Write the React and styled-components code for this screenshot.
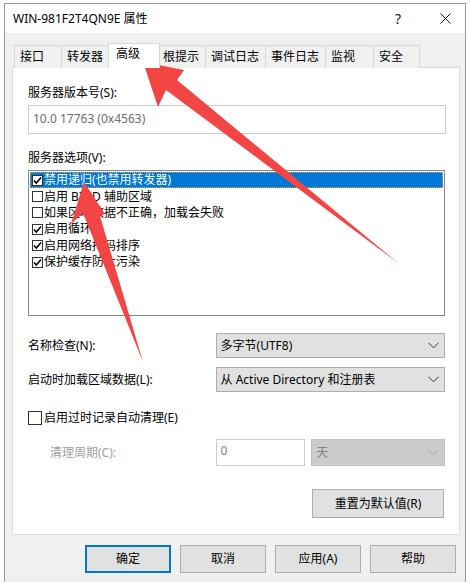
import React from 'react';
import styled, { createGlobalStyle } from 'styled-components';

const Global = createGlobalStyle`
  html, body { margin: 0; padding: 0; background: #ffffff; overflow: hidden; }
  body { font-family: "Noto Sans", "Noto Sans CJK SC", sans-serif; font-size: 12px; color: #000; }
  * { box-sizing: border-box; }
`;

const Screen = styled.div`
  position: relative;
  width: 470px;
  height: 582px;
  overflow: hidden;
  background: #ffffff;
  padding: 3px 0 0 4px;
`;

const Window = styled.div`
  width: 462px;
  height: 620px;
  border: 1px solid #9a9a9a;
  background: #f0f0f0;
  display: flex;
  flex-direction: column;
`;

const TitleBar = styled.div`
  height: 29px;
  background: #ffffff;
  display: flex;
  align-items: center;
  padding-left: 8px;
`;

const TitleText = styled.div`
  flex: 1;
  font-size: 12px;
  line-height: 16px;
  padding-top: 1px;
`;

const CaptionButton = styled.div`
  width: 40px;
  height: 29px;
  display: flex;
  align-items: center;
  justify-content: center;
  margin-right: ${p => p.$mr || 0}px;
  font-size: 14px;
  color: #111;
`;

const Body = styled.div`
  padding: 10px 5px 0 7px;
  display: flex;
  flex-direction: column;
`;

const TabBar = styled.div`
  display: flex;
  align-items: flex-end;
  height: 25px;
  margin-bottom: -1px;
  padding-left: 2px;
`;

const Tab = styled.div`
  position: relative;
  width: ${p => (p.$active ? p.$w + 4 : p.$w)}px;
  height: ${p => (p.$active ? 25 : 23)}px;
  margin-left: ${p => (p.$first ? 0 : p.$active ? -3 : -1)}px;
  margin-right: ${p => (p.$active ? -2 : 0)}px;
  border: 1px solid #d9d9d9;
  border-bottom: none;
  background: ${p => (p.$active ? '#ffffff' : '#f0f0f0')};
  z-index: ${p => (p.$active ? 1 : 0)};
  padding: ${p => (p.$active ? '2px 0 0 7px' : '3px 0 0 5px')};
  line-height: 16px;
  white-space: nowrap;
`;

const Panel = styled.div`
  width: 448px;
  height: 468px;
  background: #ffffff;
  border: 1px solid #d9d9d9;
  padding: 0 14px 0 15px;
  display: flex;
  flex-direction: column;
`;

const Label = styled.div`
  line-height: 16px;
  margin-top: ${p => p.$mt || 0}px;
  color: ${p => (p.$disabled ? '#a0a0a0' : '#000')};
  white-space: nowrap;
`;

const ReadOnlyBox = styled.div`
  margin-top: 4px;
  width: 418px;
  height: 29px;
  border: 1px solid #cccccc;
  background: #ffffff;
  color: #6d6d6d;
  padding: 5px 0 0 4px;
  line-height: 16px;
`;

const ListBox = styled.div`
  margin-top: 4px;
  width: 417px;
  height: 146px;
  border: 1px solid #828790;
  padding: 1px;
  display: flex;
  flex-direction: column;
`;

const ListRow = styled.div`
  height: 16.4px;
  display: flex;
  align-items: center;
  padding-left: 2px;
  background: ${p => (p.$selected ? '#0078d7' : 'transparent')};
  color: ${p => (p.$selected ? '#ffffff' : '#000')};
  outline: ${p => (p.$selected ? '1px dotted #f3a050' : 'none')};
  outline-offset: -1px;
  white-space: nowrap;
  line-height: 16px;
`;

const Check = styled.div`
  width: ${p => p.$size}px;
  height: ${p => p.$size}px;
  border: 1px solid #333333;
  background: #ffffff;
  display: flex;
  align-items: center;
  justify-content: center;
  flex-shrink: 0;
  margin-right: ${p => p.$gap}px;
`;

const FieldRow = styled.div`
  display: flex;
  align-items: ${p => p.$align || 'center'};
  margin-top: ${p => p.$mt || 0}px;
`;

const LabelCell = styled.div`
  width: ${p => p.$w}px;
  padding-left: ${p => p.$pl || 0}px;
  line-height: 16px;
  color: ${p => (p.$disabled ? '#a0a0a0' : '#000')};
  white-space: nowrap;
  align-self: center;
`;

const Select = styled.div`
  width: ${p => p.$w}px;
  height: ${p => p.$h}px;
  margin-left: ${p => p.$ml || 0}px;
  border: 1px solid ${p => (p.$disabled ? '#bfbfbf' : '#adadad')};
  background: ${p => (p.$disabled ? '#cccccc' : '#e1e1e1')};
  color: ${p => (p.$disabled ? '#838383' : '#000')};
  display: flex;
  align-items: center;
  padding: 0 5px 0 4px;
  line-height: 16px;
  white-space: nowrap;
`;

const SelectText = styled.span`
  flex: 1;
`;

const TextInput = styled.div`
  width: ${p => p.$w}px;
  height: 27px;
  border: 1px solid #cccccc;
  background: #ffffff;
  color: #838383;
  padding: 3px 0 0 4px;
  line-height: 16px;
`;

const CheckLine = styled.div`
  display: flex;
  align-items: center;
  margin-top: ${p => p.$mt || 0}px;
  height: 16px;
  line-height: 16px;
  white-space: nowrap;
`;

const Button = styled.div`
  width: ${p => p.$w}px;
  height: ${p => p.$h}px;
  border: ${p => (p.$default ? '2px solid #0078d7' : '1px solid #adadad')};
  background: #e1e1e1;
  display: flex;
  align-items: center;
  justify-content: center;
  line-height: 16px;
  white-space: nowrap;
`;

const ResetRow = styled.div`
  display: flex;
  justify-content: flex-end;
  margin-top: 23px;
  padding-right: 1px;
`;

const ButtonBar = styled.div`
  display: flex;
  justify-content: flex-end;
  gap: 9px;
  margin-top: 10px;
  padding-right: 4px;
`;

const Overlay = styled.svg`
  position: absolute;
  left: 0;
  top: 0;
  pointer-events: none;
`;

const Chevron = ({ color = '#333' }) => (
  <svg width="11" height="7" viewBox="0 0 11 7">
    <polyline points="0.5,0.8 5.5,5.8 10.5,0.8" fill="none" stroke={color} strokeWidth="1" />
  </svg>
);

const Tick = () => (
  <svg width="9" height="9" viewBox="0 0 9 9">
    <polyline points="1,4.5 3.3,7 8,1.5" fill="none" stroke="#000" strokeWidth="1.6" />
  </svg>
);

const CloseIcon = () => (
  <svg width="11" height="11" viewBox="0 0 11 11">
    <path d="M0.5 0.5 L10.5 10.5 M10.5 0.5 L0.5 10.5" stroke="#111" strokeWidth="1" />
  </svg>
);

const tabs = [
  { t: '接口', w: 48 },
  { t: '转发器', w: 50 },
  { t: '高级', w: 48, active: true },
  { t: '根提示', w: 49 },
  { t: '调试日志', w: 61 },
  { t: '事件日志', w: 61 },
  { t: '监视', w: 49 },
  { t: '安全', w: 47 },
];

const options = [
  { t: '禁用递归(也禁用转发器)', c: true, s: true },
  { t: '启用 BIND 辅助区域', c: false },
  { t: '如果区域数据不正确，加载会失败', c: false },
  { t: '启用循环', c: true },
  { t: '启用网络掩码排序', c: true },
  { t: '保护缓存防止污染', c: true },
];

export default function App() {
  return (
    <Screen>
      <Global />
      <Window>
        <TitleBar>
          <TitleText>WIN-981F2T4QN9E 属性</TitleText>
          <CaptionButton $mr={7}>?</CaptionButton>
          <CaptionButton><CloseIcon /></CaptionButton>
        </TitleBar>
        <Body>
          <TabBar>
            {tabs.map((tb, i) => (
              <Tab key={tb.t} $w={tb.w} $active={tb.active} $first={i === 0}>{tb.t}</Tab>
            ))}
          </TabBar>
          <Panel>
            <Label $mt={17}>服务器版本号(S):</Label>
            <ReadOnlyBox>10.0 17763 (0x4563)</ReadOnlyBox>
            <Label $mt={16}>服务器选项(V):</Label>
            <ListBox>
              {options.map(o => (
                <ListRow key={o.t} $selected={o.s}>
                  <Check $size={11} $gap={1}>{o.c && <Tick />}</Check>
                  {o.t}
                </ListRow>
              ))}
            </ListBox>
            <FieldRow $mt={17}>
              <LabelCell $w={188}>名称检查(N):</LabelCell>
              <Select $w={230} $h={25}>
                <SelectText>多字节(UTF8)</SelectText>
                <Chevron />
              </Select>
            </FieldRow>
            <FieldRow $mt={9}>
              <LabelCell $w={188}>启动时加载区域数据(L):</LabelCell>
              <Select $w={230} $h={25}>
                <SelectText>从 Active Directory 和注册表</SelectText>
                <Chevron />
              </Select>
            </FieldRow>
            <CheckLine $mt={18}>
              <Check $size={14} $gap={2} />
              启用过时记录自动清理(E)
            </CheckLine>
            <FieldRow $mt={13}>
              <LabelCell $w={188} $pl={22} $disabled>清理周期(C):</LabelCell>
              <TextInput $w={90}>0</TextInput>
              <Select $w={134} $h={27} $ml={6} $disabled>
                <SelectText>天</SelectText>
                <Chevron color="#a6a6a6" />
              </Select>
            </FieldRow>
            <ResetRow>
              <Button $w={132} $h={29}>重置为默认值(R)</Button>
            </ResetRow>
          </Panel>
          <ButtonBar>
            <Button $w={86} $h={28} $default>确定</Button>
            <Button $w={86} $h={28}>取消</Button>
            <Button $w={86} $h={28}>应用(A)</Button>
            <Button $w={86} $h={28}>帮助</Button>
          </ButtonBar>
        </Body>
      </Window>
      <Overlay width="470" height="582" viewBox="0 0 470 582">
        <polygon
          points="143,62 184,70 177,80 398,263 166,90 158,107"
          fill="#f44545"
        />
        <polygon
          points="84,182 105,214 100,216 143,362 83,213 71,224"
          fill="#f44545"
        />
      </Overlay>
    </Screen>
  );
}
